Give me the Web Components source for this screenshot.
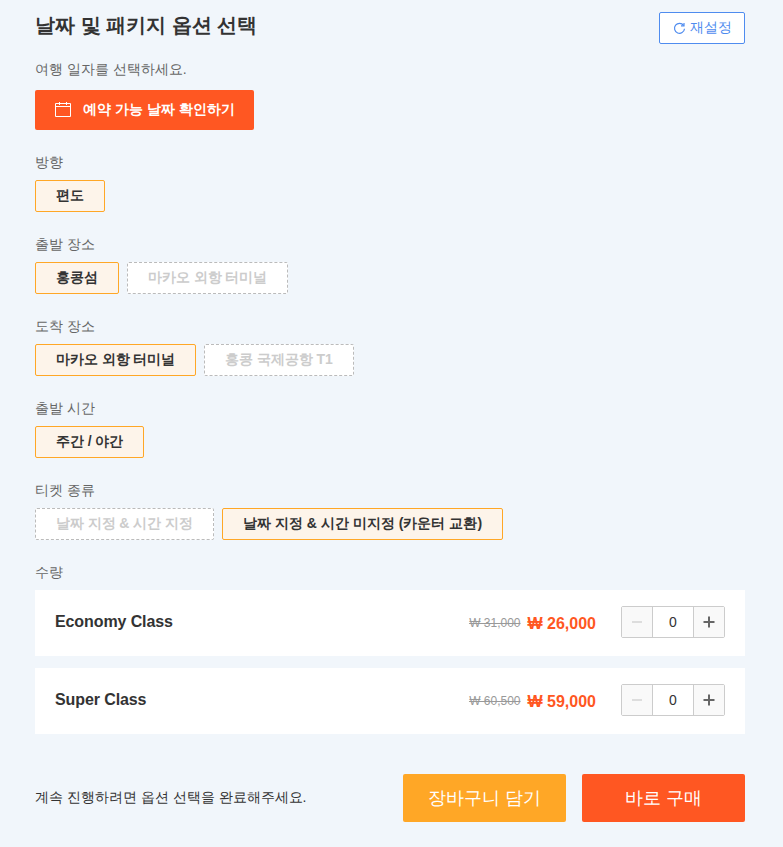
<!DOCTYPE html>
<html lang="ko"><head><meta charset="utf-8">
<style>
html,body{margin:0;padding:0;background:#f1f6fb}
body{font-family:"Liberation Sans","Noto Sans",sans-serif;color:#333}
</style></head><body>
<option-panel>
  <panel-head></panel-head>
  <date-block></date-block>
  <option-group label="방향"><opt-chip state="on">편도</opt-chip></option-group>
  <option-group label="출발 장소"><opt-chip state="on">홍콩섬</opt-chip><opt-chip state="off">마카오 외항 터미널</opt-chip></option-group>
  <option-group label="도착 장소"><opt-chip state="on">마카오 외항 터미널</opt-chip><opt-chip state="off">홍콩 국제공항 T1</opt-chip></option-group>
  <option-group label="출발 시간"><opt-chip state="on">주간 / 야간</opt-chip></option-group>
  <option-group label="티켓 종류"><opt-chip state="off">날짜 지정 &amp; 시간 지정</opt-chip><opt-chip state="on" style="word-spacing:.1px">날짜 지정 &amp; 시간 미지정 (카운터 교환)</opt-chip></option-group>
  <qty-section>
    <qty-row name="Economy Class" was="₩ 31,000" now="₩ 26,000"></qty-row>
    <qty-row name="Super Class" was="₩ 60,500" now="₩ 59,000"></qty-row>
  </qty-section>
  <panel-foot></panel-foot>
</option-panel>
<script>
const FF='"Liberation Sans","Noto Sans",sans-serif';
function def(name,html){
  customElements.define(name,class extends HTMLElement{
    connectedCallback(){
      if(this.shadowRoot)return;
      const r=this.attachShadow({mode:'open'});
      r.innerHTML=typeof html==='function'?html(this):html;
    }
  });
}
def('option-panel',`<style>:host{display:block;width:710px;margin:0 0 0 35px;box-sizing:border-box}</style><slot></slot>`);
def('panel-head',`<style>
:host{display:flex;justify-content:space-between;align-items:flex-start;padding-top:12px;height:32px}
h2{margin:0;font-size:20px;line-height:26px;font-weight:700;color:#333}
button{width:86px;height:32px;box-sizing:border-box;border:1px solid #4f8cef;border-radius:2px;background:#fff;color:#4f8cef;font:14px ${FF};display:flex;align-items:center;justify-content:center;gap:4px;padding:0}
svg{width:13px;height:13px;display:block}
</style><h2>날짜 및 패키지 옵션 선택</h2><button><svg viewBox="0 0 13 13" fill="none" stroke="#4f8cef" stroke-width="1.2"><path d="M10.6 3.4A5 5 0 1 0 11.5 6.8"/><path d="M11 .9v3h-3" /></svg>재설정</button>`);
def('date-block',`<style>
:host{display:block;padding-top:15px}
p{margin:0;font-size:14px;line-height:20px;color:#666}
button{margin-top:11px;width:219px;height:40px;border:0;border-radius:2px;background:#ff5722;color:#fff;font:700 14px ${FF};display:flex;align-items:center;padding:0 0 0 20px;gap:12px}
svg{width:16px;height:16px;display:block}
</style><p>여행 일자를 선택하세요.</p><button><svg viewBox="0 0 16 16" fill="none" stroke="#fff" stroke-width="1"><path d="M.5 1.5h15v13H.5zM.5 4.5h15M4.5 0v3M11.5 0v3"/></svg>예약 가능 날짜 확인하기</button>`);
def('option-group',el=>`<style>
:host{display:block;padding-top:22px}
.l{font-size:14px;line-height:20px;color:#666;margin-bottom:8px}
.c{display:flex;gap:8px}
</style><div class="l">${el.getAttribute('label')}</div><div class="c"><slot></slot></div>`);
def('opt-chip',el=>{const on=el.getAttribute('state')==='on';return `<style>
:host{display:block;box-sizing:border-box;height:32px;padding:0 20px;border-radius:2px;font-size:14px;font-weight:700;line-height:28px;word-spacing:-.25px;
${on?'border:1px solid #ffa726;background:#fdf4ea;color:#333':'border:1px dashed #bbb;background:#fff;color:#ccc'}}
</style><slot></slot>`});
def('qty-section',`<style>
:host{display:block;padding-top:22px}
.l{font-size:14px;line-height:20px;color:#666;margin-bottom:8px}
.r{display:flex;flex-direction:column;gap:12px}
</style><div class="l">수량</div><div class="r"><slot></slot></div>`);
def('qty-row',el=>`<style>
:host{display:flex;align-items:center;height:66px;background:#fff;padding:0 20px 2px;box-sizing:border-box}
.n{font-size:16px;font-weight:700;color:#333;flex:1;letter-spacing:-.1px}
s{font-size:12px;color:#999;margin-top:2px}
b{font-size:16px;color:#ff5722;margin-left:7px;margin-right:25px;margin-top:4px}
.q{display:flex;width:104px;height:32px;box-sizing:border-box;border:1px solid #ccc;border-radius:2px}
.q span{display:flex;align-items:center;justify-content:center}
.m{width:30px;background:#f9f9f9}
.v{width:42px;box-sizing:border-box;background:#fff;border:solid #ccc;border-width:0 1px;font-size:14px;color:#333;padding-bottom:1px}
.p{flex:1;background:#f9f9f9}
svg{width:12px;height:12px}
</style><div class="n">${el.getAttribute('name')}</div><s>${el.getAttribute('was')}</s><b>${el.getAttribute('now')}</b>
<div class="q"><span class="m"><svg viewBox="0 0 12 12"><path d="M1 6h10" stroke="#ddd" stroke-width="2"/></svg></span><span class="v">0</span><span class="p"><svg viewBox="0 0 12 12"><path d="M.5 6h11M6 .5v11" stroke="#666" stroke-width="2"/></svg></span></div>`);
def('panel-foot',`<style>
:host{display:flex;align-items:center;padding-top:40px;height:48px;padding-bottom:25px}
p{margin:0;flex:1;font-size:14px;color:#333}
button{width:163px;height:48px;border:0;border-radius:2px;color:#fff;font:18px ${FF};padding:0}
.a{background:#ffa726;margin-right:16px}
.b{background:#ff5722}
</style><p>계속 진행하려면 옵션 선택을 완료해주세요.</p><button class="a">장바구니 담기</button><button class="b">바로 구매</button>`);
</script>
</body></html>
